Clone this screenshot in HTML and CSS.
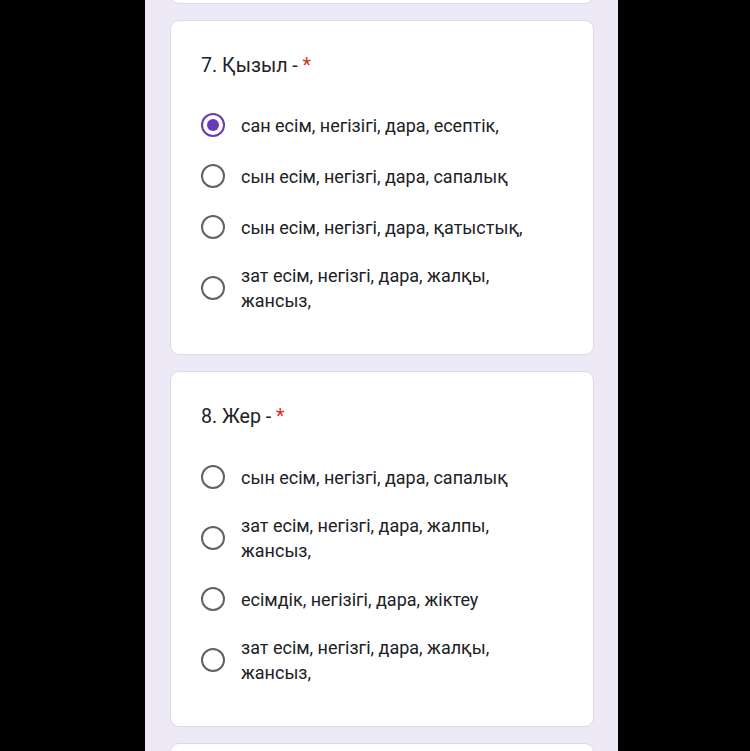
FILE: index.html
```html
<!DOCTYPE html>
<html lang="kk">
<head>
<meta charset="utf-8">
<title>Form</title>
<link rel="stylesheet" href="styles.css">
</head>
<body>
<div class="column">
  <div class="card stub"></div>

  <div class="card q7">
    <div class="title">7. Қызыл - <span class="req">*</span></div>
    <div class="options">
      <div class="opt"><span class="radio checked"></span><span class="label">сан есім, негізігі, дара, есептік,</span></div>
      <div class="opt"><span class="radio"></span><span class="label">сын есім, негізгі, дара, сапалық</span></div>
      <div class="opt"><span class="radio"></span><span class="label">сын есім, негізгі, дара, қатыстық,</span></div>
      <div class="opt"><span class="radio"></span><span class="label">зат есім, негізгі, дара, жалқы,<br>жансыз,</span></div>
    </div>
  </div>

  <div class="card q8">
    <div class="title">8. Жер - <span class="req">*</span></div>
    <div class="options">
      <div class="opt"><span class="radio"></span><span class="label">сын есім, негізгі, дара, сапалық</span></div>
      <div class="opt"><span class="radio"></span><span class="label">зат есім, негізгі, дара, жалпы,<br>жансыз,</span></div>
      <div class="opt"><span class="radio"></span><span class="label">есімдік, негізігі, дара, жіктеу</span></div>
      <div class="opt"><span class="radio"></span><span class="label">зат есім, негізгі, дара, жалқы,<br>жансыз,</span></div>
    </div>
  </div>

  <div class="card tail"></div>
</div>
</body>
</html>
```

FILE: styles.css
```css
html, body {
  margin: 0;
  padding: 0;
  background: #000;
  height: 100%;
  overflow: hidden;
}
body {
  font-family: Roboto, "Noto Sans", Arial, sans-serif;
  color: #202124;
}
.column {
  margin-left: 145px;
  width: 473px;
  height: 751px;
  overflow: hidden;
  background: #ede9f6;
  padding: 0 24px 0 25px;
  box-sizing: border-box;
  display: flex;
  flex-direction: column;
  gap: 16px;
}
.card {
  background: #fff;
  border: 1px solid #dcdae2;
  border-radius: 9px;
  padding: 33px 30px 31px 30px;
  flex-shrink: 0;
}
.card.q8 {
  padding-bottom: 31px;
}
.card.q8 .options {
  margin-top: 23px;
}
.card.stub {
  margin-top: -20px;
  height: 24px;
  padding: 0;
  box-sizing: border-box;
}
.card.tail {
  height: 60px;
  padding: 0;
}
.title {
  font-size: 19.6px;
  line-height: 24px;
}
.req {
  color: #d93025;
}
.options {
  margin-top: 22px;
  display: flex;
  flex-direction: column;
  gap: 1px;
}
.opt {
  display: flex;
  align-items: center;
  min-height: 50px;
}
.radio {
  width: 24px;
  height: 24px;
  box-sizing: border-box;
  border: 2px solid #5f6368;
  border-radius: 50%;
  flex-shrink: 0;
  display: flex;
  align-items: center;
  justify-content: center;
}
.radio.checked {
  border-color: #673ab7;
}
.radio.checked::after {
  content: "";
  width: 12px;
  height: 12px;
  border-radius: 50%;
  background: #673ab7;
}
.label {
  margin-left: 16px;
  font-size: 18px;
  line-height: 25px;
  padding: 10px 0;
  color: #202124;
}
```
